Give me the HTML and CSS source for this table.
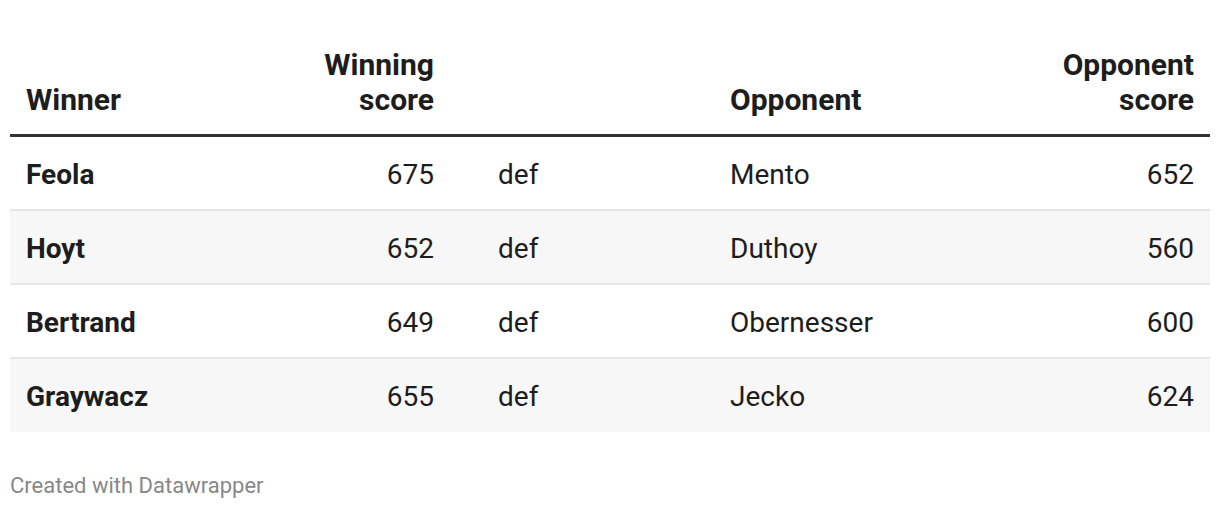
FILE: index.html
```html
<!DOCTYPE html>
<html>
<head>
<meta charset="utf-8">
<link rel="stylesheet" href="styles.css">
</head>
<body>
<div class="chart">
  <table class="results">
    <colgroup>
      <col class="c1"><col class="c2"><col class="c3"><col class="c4"><col class="c5">
    </colgroup>
    <thead>
      <tr>
        <th class="left">Winner</th>
        <th class="right">Winning<br>score</th>
        <th class="left def"></th>
        <th class="left">Opponent</th>
        <th class="right">Opponent<br>score</th>
      </tr>
    </thead>
    <tbody>
      <tr>
        <td class="name">Feola</td><td class="right">675</td><td class="def">def</td><td>Mento</td><td class="right">652</td>
      </tr>
      <tr class="alt">
        <td class="name">Hoyt</td><td class="right">652</td><td class="def">def</td><td>Duthoy</td><td class="right">560</td>
      </tr>
      <tr>
        <td class="name">Bertrand</td><td class="right">649</td><td class="def">def</td><td>Obernesser</td><td class="right">600</td>
      </tr>
      <tr class="alt">
        <td class="name">Graywacz</td><td class="right">655</td><td class="def">def</td><td>Jecko</td><td class="right">624</td>
      </tr>
    </tbody>
  </table>
  <div class="footer">Created with Datawrapper</div>
</div>
</body>
</html>
```

FILE: styles.css
```css
html, body {
  margin: 0;
  padding: 0;
  background: #fff;
}
body {
  font-family: Roboto, "Liberation Sans", sans-serif;
  color: #1d1d1d;
}
.chart {
  padding: 38px 10px 0 10px;
}
.results {
  width: 1200px;
  border-collapse: collapse;
  table-layout: fixed;
  font-size: 28px;
}
.c1 { width: 200px; }
.c2 { width: 240px; }
.c3 { width: 264px; }
.c4 { width: 286px; }
.c5 { width: 210px; }
th {
  font-size: 30px;
  font-weight: 700;
  line-height: 35px;
  padding: 9px 16px 17px 16px;
  vertical-align: bottom;
  border-bottom: 3px solid #333;
}
th.left { text-align: left; }
th.right { text-align: right; }
td {
  height: 74px;
  padding: 4px 16px 0 16px;
  line-height: 36px;
  vertical-align: middle;
  text-align: left;
  box-sizing: border-box;
}
tbody tr + tr td {
  border-top: 2px solid #e6e6e6;
}
tbody tr.alt td {
  background: #f7f7f7;
}
td.name { font-weight: 700; }
td.right { text-align: right; }
td.def, th.def { padding-left: 48px; }
.footer {
  margin-top: 41px;
  font-size: 22px;
  color: #888;
  line-height: 26px;
}
```
